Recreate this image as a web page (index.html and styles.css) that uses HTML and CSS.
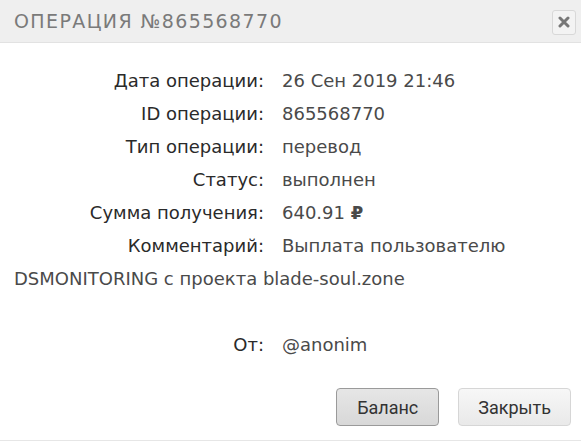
FILE: index.html
```html
<!DOCTYPE html>
<html lang="ru">
<head>
<meta charset="utf-8">
<link rel="stylesheet" href="styles.css">
</head>
<body>
<div class="dialog">
  <div class="header">
    <div class="title">ОПЕРАЦИЯ №865568770</div>
    <button class="close" aria-label="Закрыть">
      <svg width="12" height="12" viewBox="0 0 12 12"><path d="M2 2 L10 10 M10 2 L2 10" stroke="#777" stroke-width="3" stroke-linecap="round"/></svg>
    </button>
  </div>
  <div class="content">
    <div class="row"><span class="label">Дата операции:</span><span class="value">26 Сен 2019 21:46</span></div>
    <div class="row"><span class="label">ID операции:</span><span class="value">865568770</span></div>
    <div class="row"><span class="label">Тип операции:</span><span class="value">перевод</span></div>
    <div class="row"><span class="label">Статус:</span><span class="value">выполнен</span></div>
    <div class="row"><span class="label">Сумма получения:</span><span class="value">640.91 <b class="rub">₽</b></span></div>
    <div class="row"><span class="label">Комментарий:</span><span class="value">Выплата пользователю DSMONITORING с проекта blade-soul.zone</span></div>
    <div class="row from"><span class="label">От:</span><span class="value">@anonim</span></div>
  </div>
  <div class="footer">
    <button class="btn btn-active">Баланс</button>
    <button class="btn">Закрыть</button>
  </div>
</div>
</body>
</html>
```
FILE: styles.css
```css
html, body {
  margin: 0;
  padding: 0;
  background: #fff;
}
.dialog {
  width: 581px;
  height: 440px;
  border-bottom: 1px solid #e6e6e6;
  display: flex;
  flex-direction: column;
  font-family: "DejaVu Sans", sans-serif;
}
.header {
  height: 42px;
  background: #efefef;
  border-bottom: 1px solid #e2e2e2;
  display: flex;
  align-items: center;
  justify-content: space-between;
  padding: 0 5px 0 14px;
}
.title {
  font-family: "DejaVu Sans", sans-serif;
  font-size: 19px;
  letter-spacing: 1.4px;
  color: #7a7a7a;
}
.close {
  width: 24px;
  height: 25px;
  margin-top: 2px;
  padding: 0;
  border: 1px solid #d8d8d8;
  border-radius: 3px;
  background: #f3f3f3;
  display: flex;
  align-items: center;
  justify-content: center;
}
.content {
  padding: 21px 14px 0 14px;
  font-size: 18px;
  line-height: 33px;
  color: #444;
  flex: 1;
}
.label {
  display: inline-block;
  width: 250px;
  text-align: right;
  margin-right: 18px;
  color: #2a2a2a;
}
.value {
  color: #4a4a4a;
}
.rub {
  font-weight: bold;
}
.from {
  margin-top: 33px;
}
.footer {
  display: flex;
  justify-content: flex-end;
  gap: 19px;
  padding: 0 10px 14px 0;
}
.btn {
  height: 38px;
  padding: 0 19px;
  font-family: Roboto, "Liberation Sans", sans-serif;
  font-size: 18px;
  color: #333;
  border: 1px solid #d6d6d6;
  border-radius: 4px;
  background: linear-gradient(#f7f7f7, #e9e9e9);
}
.btn-active {
  border-color: #9a9a9a;
  background: linear-gradient(#e6e6e6, #d8d8d8);
  padding: 0 20px;
}
```
